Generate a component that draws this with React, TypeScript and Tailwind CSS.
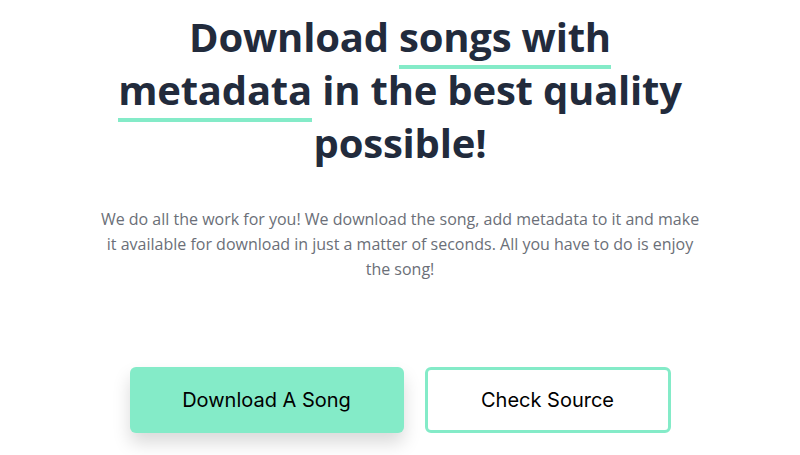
export default function App() {
  return (
    <div className="min-h-screen bg-white flex flex-col items-center pt-[10px]">
      <h1 className="text-center text-[40px] leading-[53px] font-bold text-[#222b3c] font-['Open_Sans',sans-serif] tracking-[-0.2px]">
        Download{" "}
        <span className="border-b-4 border-[#84ebc8] pb-[1px]">songs with</span>
        <br />
        <span className="border-b-4 border-[#84ebc8] pb-[1px]">metadata</span>{" "}
        in the best quality
        <br />
        possible!
      </h1>

      <p className="mt-[38px] w-[606px] text-center text-[16px] leading-[25px] text-[#6b6f78] font-['Open_Sans',sans-serif]">
        We do all the work for you! We download the song, add metadata to it and make it
        available for download in just a matter of seconds. All you have to do is enjoy the
        song!
      </p>

      <div className="mt-[85px] flex gap-[21px]">
        <button className="w-[274px] h-[66px] rounded-md bg-[#84ebc8] text-[20px] text-black font-['Inter',sans-serif] shadow-[0_10px_18px_rgba(0,0,0,0.15)]">
          Download A Song
        </button>
        <button className="w-[246px] h-[66px] rounded-md border-[3px] border-[#84ebc8] bg-white text-[20px] text-black font-['Inter',sans-serif]">
          Check Source
        </button>
      </div>
    </div>
  );
}
